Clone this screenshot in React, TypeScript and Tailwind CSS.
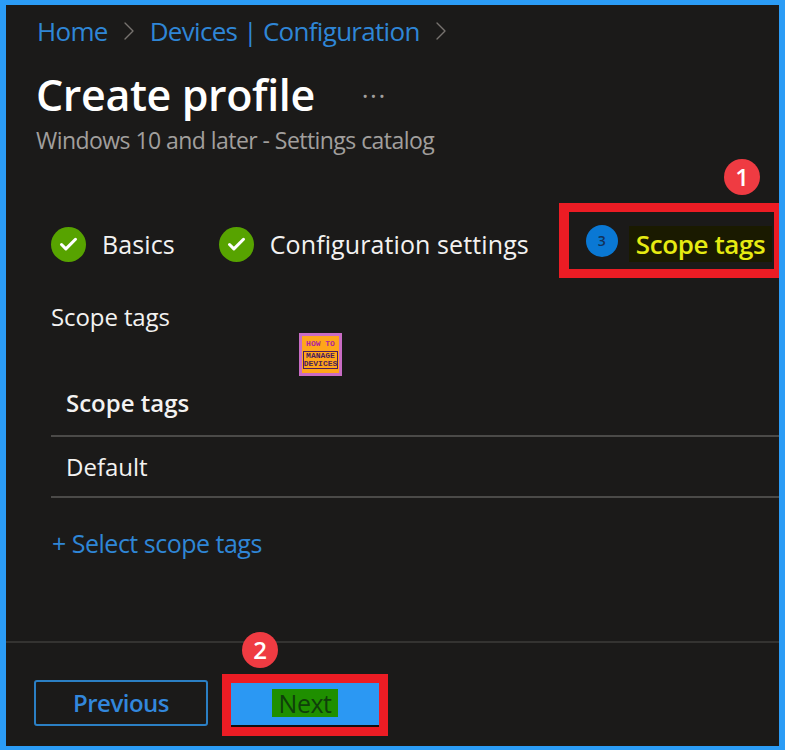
import { Check, ChevronRight } from 'lucide-react'

const font = { fontFamily: '"Open Sans", "Noto Sans", sans-serif' }

function Crumb({ label }: { label: string }) {
  return (
    <>
      <span className="text-[#2f86d6]">{label}</span>
      <ChevronRight className="mx-[5px] h-[32px] w-[32px] text-[#77736f]" strokeWidth={1} aria-hidden="true" />
    </>
  )
}

function DoneStep({ label, className }: { label: string; className: string }) {
  return (
    <div className={`flex shrink-0 items-center ${className}`}>
      <span className="flex h-[35px] w-[35px] items-center justify-center rounded-full bg-[#57a300]">
        <Check className="h-[21px] w-[21px] text-white" strokeWidth={3.5} aria-hidden="true" />
      </span>
      <span className="ml-[16px] whitespace-nowrap text-[25px] tracking-[0.1px] text-[#f3f2f1]">{label}</span>
    </div>
  )
}

function Badge({ n, className }: { n: number; className: string }) {
  return (
    <span
      className={`absolute flex h-[36px] w-[36px] items-center justify-center rounded-full bg-[#ef3b42] text-[24px] font-semibold text-white ${className}`}
    >
      {n}
    </span>
  )
}

export default function App() {
  return (
    <div
      style={font}
      className="relative h-[750px] w-[785px] overflow-hidden border-t-[5px] border-r-[6px] border-b-[4px] border-l-[6px] border-[#2b9cf6] bg-[#1b1a19]"
    >
      <nav className="ml-[31px] mt-[8px] flex h-[36px] items-center text-[26px] tracking-[-0.7px]">
        <Crumb label="Home" />
        <Crumb label="Devices | Configuration" />
      </nav>

      <div className="ml-[30px] mt-[16px] flex h-[60px] items-center">
        <h1 className="text-[43px] font-semibold tracking-[-0.4px] text-white">Create profile</h1>
        <span className="ml-[47px] text-[26px] leading-none tracking-[1.5px] text-[#a19f9d]">···</span>
      </div>
      <p className="ml-[30px] mt-[-3px] text-[23px] leading-[36px] tracking-[-0.55px] text-[#a19f9d]">
        Windows 10 and later - Settings catalog
      </p>

      <div className="mt-[49px] flex h-[75px] items-center">
        <DoneStep label="Basics" className="ml-[45px]" />
        <DoneStep label="Configuration settings" className="ml-[44px]" />
        <div className="ml-[30px] mt-[-8px] flex h-[75px] w-[221px] shrink-0 items-center border-y-[9px] border-r-[6px] border-l-[10px] border-[#ec1c24]">
          <span className="ml-[17px] flex h-[32px] w-[32px] shrink-0 items-center justify-center rounded-full bg-[#0a78d4] text-[14px] font-semibold text-[#12325a]">
            3
          </span>
          <span className="ml-[11px] mt-[6px] bg-[#1a1a00] px-[7px] text-[26px] leading-[36px] font-semibold tracking-[-0.4px] whitespace-nowrap text-[#e6eb12]">
            Scope tags
          </span>
        </div>
      </div>

      <p className="ml-[45px] mt-[17px] text-[24px] leading-[36px] tracking-[-0.1px] text-[#f3f2f1]">Scope tags</p>

      <div className="ml-[45px] mt-[35px]">
        <div className="flex h-[67px] items-center border-b-2 border-[#4b4a48] pl-[15px] text-[24px] font-semibold text-[#f3f2f1]">
          Scope tags
        </div>
        <div className="flex h-[61px] items-center border-b-2 border-[#4b4a48] pl-[15px] text-[24px] text-[#f3f2f1]">
          Default
        </div>
      </div>

      <p className="ml-[46px] mt-[27px] text-[25px] leading-[36px] tracking-[-0.5px] text-[#2f86d6]">+ Select scope tags</p>

      <div className="mt-[80px] h-[2px] bg-[#343331]" />

      <div className="ml-[28px] mt-[31px] flex items-center">
        <button className="mt-[-4px] h-[46px] w-[174px] rounded-[3px] border-2 border-[#2b7fc4] text-[24px] font-semibold tracking-[-0.5px] text-[#3287dc]">
          Previous
        </button>
        <div className="ml-[14px] h-[62px] w-[166px] border-[9px] border-[#ec1c24]">
          <div className="flex h-[44px] items-center justify-center border-b-[2px] border-[#111] bg-[#2b98f3]">
            <span className="mb-[2px] bg-[#1f8f00] px-[7px] text-[25px] leading-[28px] tracking-[-0.5px] text-[#0f3f0a]">Next</span>
          </div>
        </div>
      </div>

      <Badge n={1} className="left-[718px] top-[154px]" />
      <Badge n={2} className="left-[236px] top-[627px]" />

      {/* watermark logo */}
      <div
        style={{ fontFamily: '"Liberation Mono", monospace' }}
        className="absolute left-[293px] top-[328px] flex h-[43px] w-[43px] flex-col items-center border-[3px] border-[#c96cc4] bg-[#ffa61a] pt-[4px] font-bold"
      >
        <span className="text-[8px] leading-[8px] text-[#b0279c]">HOW TO</span>
        <span className="mt-[3px] border border-[#4b1d5c] text-center text-[8px] leading-[8px] text-[#4b1d5c]">
          MANAGE
          <br />
          DEVICES
        </span>
      </div>
    </div>
  )
}
